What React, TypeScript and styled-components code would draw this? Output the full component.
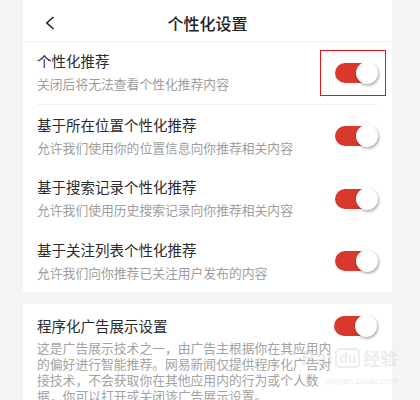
import React from "react";
import styled, { createGlobalStyle } from "styled-components";

const Global = createGlobalStyle`
  html, body { margin: 0; padding: 0; background: #f4f4f4; }
  body { font-family: "Noto Sans CJK SC", "Noto Sans", sans-serif; }
`;

const Page = styled.div`
  width: 369px;
  margin-left: 23px;
  display: flex;
  flex-direction: column;
  gap: 12px;
  position: relative;
`;

const Panel = styled.section`
  background: #ffffff;
`;

const Header = styled.header`
  height: 42px;
  box-sizing: border-box;
  padding-top: 4px;
  border-bottom: 1px solid #f1f1f1;
  display: grid;
  grid-template-columns: 1fr auto 1fr;
  align-items: center;
`;

const Back = styled.div`
  padding-left: 22px;
  display: flex;
  align-items: center;
  height: 100%;
`;

const HeaderTitle = styled.h1`
  margin: 0;
  font-size: 16px;
  font-weight: 500;
  color: #222;
  line-height: 22px;
`;

const Row = styled.div`
  height: 62.5px;
  padding: 0 14px;
`;

const RowInner = styled.div<{ $divider?: boolean }>`
  height: 100%;
  box-sizing: border-box;
  display: flex;
  align-items: center;
  justify-content: space-between;
  border-bottom: ${(p) => (p.$divider ? "1px solid #f2f2f2" : "none")};
  padding-top: ${(p) => (p.$divider ? "0" : "1px")};
`;

const TextBlock = styled.div`
  display: flex;
  flex-direction: column;
  gap: 3px;
`;

const Title = styled.div`
  font-size: 14.5px;
  line-height: 20px;
  color: #2b2b2b;
`;

const Sub = styled.div`
  font-size: 12.8px;
  line-height: 20px;
  color: #9e9e9e;
`;

const SwitchWrap = styled.div<{ $mark?: boolean }>`
  position: relative;
  width: 43px;
  height: 22px;
  flex: none;
  &::after {
    content: "";
    display: ${(p) => (p.$mark ? "block" : "none")};
    position: absolute;
    left: -15px;
    right: -8px;
    top: -12px;
    bottom: -12px;
    border: 1.5px solid #e4141b;
  }
`;

const Track = styled.div`
  position: absolute;
  left: 0;
  top: 1px;
  width: 40px;
  height: 20px;
  border-radius: 10px;
  background: #d8382d;
`;

const Thumb = styled.div`
  position: absolute;
  right: 0;
  top: 0;
  width: 22px;
  height: 22px;
  border-radius: 50%;
  background: #ffffff;
  box-shadow: 1px 1.5px 3px rgba(0, 0, 0, 0.35);
`;

const AdPanel = styled(Panel)`
  padding: 10.5px 15px 8px 14px;
`;

const AdHead = styled.div`
  height: 22px;
  display: flex;
  align-items: center;
  justify-content: space-between;
`;

const Desc = styled.p`
  margin: 3.5px 0 0;
  width: 300px;
  font-size: 12.8px;
  line-height: 16px;
  color: #a3a3a3;
`;

const Watermark = styled.div`
  position: absolute;
  left: 278px;
  top: 343px;
  display: flex;
  flex-direction: column;
  align-items: flex-start;
  color: rgba(200, 200, 200, 0.35);
  font-family: "Liberation Sans", sans-serif;
  pointer-events: none;
`;

const WmLogo = styled.div`
  display: flex;
  align-items: center;
  gap: 3px;
  font-size: 20px;
  font-weight: 700;
  line-height: 30px;
`;

const WmDu = styled.span`
  font-size: 14px;
  border: 2px solid rgba(200, 200, 200, 0.35);
  border-radius: 5px;
  padding: 0 2px;
  line-height: 16px;
`;

const WmCn = styled.span`
  font-family: "Noto Sans CJK SC", sans-serif;
  font-size: 17px;
`;

const WmUrl = styled.span`
  font-size: 9px;
  line-height: 10px;
  margin-left: 24px;
  margin-top: 3px;
`;

function Switch({ mark }: { mark?: boolean }) {
  return (
    <SwitchWrap $mark={mark}>
      <Track />
      <Thumb />
    </SwitchWrap>
  );
}

const items = [
  { t: "个性化推荐", s: "关闭后将无法查看个性化推荐内容", mark: true, divider: true },
  { t: "基于所在位置个性化推荐", s: "允许我们使用你的位置信息向你推荐相关内容" },
  { t: "基于搜索记录个性化推荐", s: "允许我们使用历史搜索记录向你推荐相关内容" },
  { t: "基于关注列表个性化推荐", s: "允许我们向你推荐已关注用户发布的内容" },
];

export default function App() {
  return (
    <>
      <Global />
      <Page>
        <Panel>
          <Header>
            <Back>
              <svg width="10" height="14" viewBox="0 0 10 14">
                <polyline
                  points="8.5,1 1.8,7 8.5,13"
                  fill="none"
                  stroke="#222"
                  strokeWidth="1.6"
                />
              </svg>
            </Back>
            <HeaderTitle>个性化设置</HeaderTitle>
            <div />
          </Header>
          {items.map((it) => (
            <Row key={it.t}>
              <RowInner $divider={it.divider}>
                <TextBlock>
                  <Title>{it.t}</Title>
                  <Sub>{it.s}</Sub>
                </TextBlock>
                <Switch mark={it.mark} />
              </RowInner>
            </Row>
          ))}
        </Panel>
        <AdPanel>
          <AdHead>
            <Title>程序化广告展示设置</Title>
            <Switch />
          </AdHead>
          <Desc>
            这是广告展示技术之一，由广告主根据你在其应用内的偏好进行智能推荐。网易新闻仅提供程序化广告对接技术，不会获取你在其他应用内的行为或个人数据，你可以打开或关闭该广告展示设置。
          </Desc>
        </AdPanel>
        <Watermark>
          <WmLogo>
            <span>Bai</span>
            <WmDu>du</WmDu>
            <WmCn>经验</WmCn>
          </WmLogo>
          <WmUrl>jingyan.baidu.com</WmUrl>
        </Watermark>
      </Page>
    </>
  );
}
